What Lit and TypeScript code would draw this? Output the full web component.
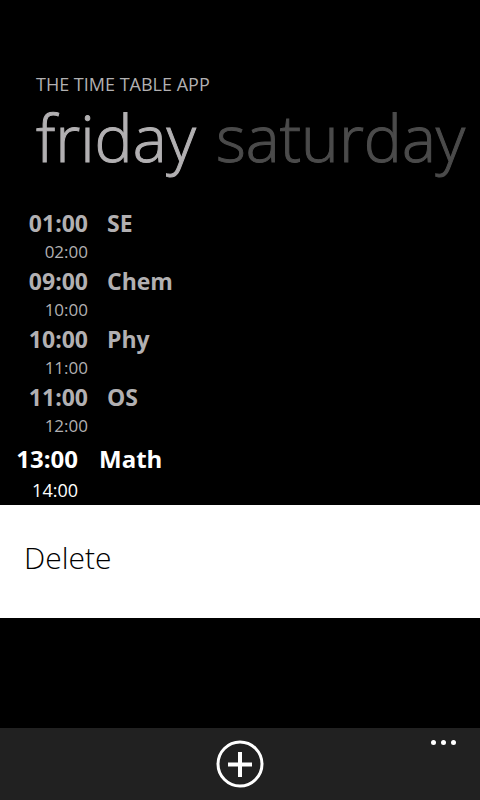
import { LitElement, html, css } from "lit";
import { customElement, property, state } from "lit/decorators.js";
import { classMap } from "lit/directives/class-map.js";

interface Lesson {
  start: string;
  end: string;
  name: string;
}

@customElement("day-schedule")
class DaySchedule extends LitElement {
  @property({ attribute: false }) lessons: Lesson[] = [];
  @property({ type: Number }) selected = -1;

  static styles = css`
    :host {
      display: block;
    }
    table,
    tbody {
      display: block;
    }
    .lesson {
      display: grid;
      grid-template-columns: 88px 1fr;
      column-gap: 19px;
      color: #b2b0b2;
    }
    .times,
    .name {
      padding: 0;
    }
    .times {
      text-align: right;
    }
    .start,
    .name {
      font-size: 23px;
      line-height: 32px;
      font-weight: 700;
    }
    .start,
    .end {
      display: block;
    }
    .end {
      font-size: 17px;
      line-height: 26px;
    }
    .name {
      text-align: left;
    }
    .selected {
      grid-template-columns: 78px 1fr;
      column-gap: 21px;
      padding-top: 4px;
      color: #fff;
    }
    .selected .start,
    .selected .name {
      font-size: 24px;
    }
    .selected .end {
      font-size: 18px;
      line-height: 30px;
    }
  `;

  render() {
    return html`
      <table>
        <tbody>
          ${this.lessons.map(
            (l, i) => html`
              <tr class=${classMap({ lesson: true, selected: i === this.selected })}>
                <td class="times">
                  <time class="start">${l.start}</time>
                  <time class="end">${l.end}</time>
                </td>
                <th class="name" scope="row">${l.name}</th>
              </tr>
            `
          )}
        </tbody>
      </table>
    `;
  }
}

@customElement("app-bar")
class AppBar extends LitElement {
  static styles = css`
    :host {
      display: grid;
      grid-template-columns: 1fr auto 1fr;
      height: 72px;
      background: #212121;
    }
    button {
      padding: 0;
      border: 0;
      background: none;
      color: #fff;
      cursor: pointer;
    }
    svg {
      display: block;
    }
    .add {
      grid-column: 2;
      align-self: center;
    }
    .more {
      justify-self: end;
      align-self: start;
      padding: 12px 24px 12px 12px;
    }
  `;

  render() {
    return html`
      <button class="add" aria-label="Add">
        <svg width="48" height="48" viewBox="0 0 48 48" fill="none" stroke="currentColor">
          <circle cx="24" cy="24" r="22" stroke-width="3" />
          <path d="M24 12v25M12 24.500h24" stroke-width="4" />
        </svg>
      </button>
      <button class="more" aria-label="More">
        <svg width="25" height="5" viewBox="0 0 25 5" fill="currentColor">
          <circle cx="2.500" cy="2.500" r="2.500" />
          <circle cx="12.500" cy="2.500" r="2.500" />
          <circle cx="22.500" cy="2.500" r="2.500" />
        </svg>
      </button>
    `;
  }
}

@customElement("app-root")
class AppRoot extends LitElement {
  @state() private day = "friday";

  private days = ["friday", "saturday"];
  private lessons: Lesson[] = [
    { start: "01:00", end: "02:00", name: "SE" },
    { start: "09:00", end: "10:00", name: "Chem" },
    { start: "10:00", end: "11:00", name: "Phy" },
    { start: "11:00", end: "12:00", name: "OS" },
    { start: "13:00", end: "14:00", name: "Math" },
  ];

  static styles = css`
    :host {
      display: flex;
      flex-direction: column;
      min-height: 100vh;
      overflow: hidden;
      background: #000;
      color: #b2b0b2;
      font-family: "Open Sans", "Noto Sans", sans-serif;
    }
    button {
      padding: 0;
      border: 0;
      background: none;
      font-family: inherit;
      cursor: pointer;
    }
    header {
      padding: 72px 0 0 36px;
    }
    h1 {
      margin: 0;
      font-size: 18px;
      line-height: 24px;
      font-weight: 400;
    }
    nav {
      display: flex;
      gap: 20px;
    }
    .day {
      color: #4b4b4b;
      font-size: 64px;
      line-height: 84px;
      font-weight: 300;
      white-space: nowrap;
      -webkit-text-stroke: 1px currentColor;
    }
    .current {
      color: #b2b0b2;
    }
    main {
      flex: 1;
      padding-top: 27px;
    }
    .menu {
      display: flex;
      flex-direction: column;
      padding: 20px 0 28px;
      background: #fff;
    }
    .item {
      padding: 0 24px;
      color: #000;
      font-size: 30px;
      line-height: 65px;
      font-weight: 300;
      text-align: left;
    }
  `;

  render() {
    return html`
      <header>
        <h1>THE TIME TABLE APP</h1>
        <nav>
          ${this.days.map(
            (d) => html`<button
              class=${classMap({ day: true, current: d === this.day })}
              @click=${() => (this.day = d)}
            >${d}</button>`
          )}
        </nav>
      </header>
      <main>
        <day-schedule .lessons=${this.lessons} .selected=${4}></day-schedule>
        <div class="menu" role="menu">
          <button class="item" role="menuitem">Delete</button>
        </div>
      </main>
      <app-bar></app-bar>
    `;
  }
}
